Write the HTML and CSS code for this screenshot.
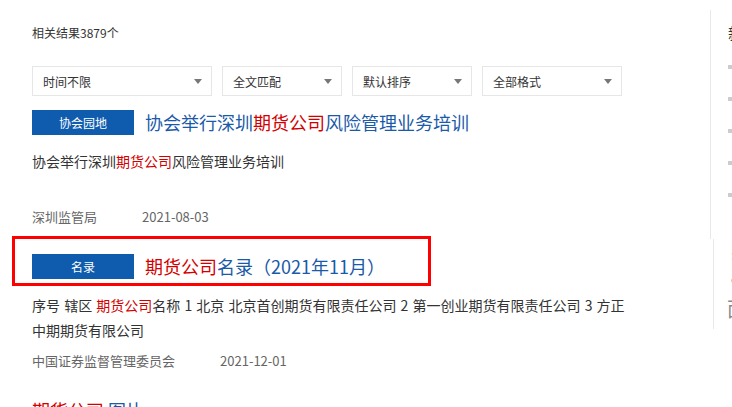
FILE: index.html
```html
<!DOCTYPE html>
<html lang="zh-CN">
<head>
<meta charset="utf-8">
<title>搜索结果</title>
<link rel="stylesheet" href="styles.css">
</head>
<body>
<div class="page">
  <div class="main">
    <div class="count">相关结果3879个</div>
    <div class="filters">
      <div class="select w180"><span>时间不限</span><i class="arrow"></i></div>
      <div class="select w120"><span>全文匹配</span><i class="arrow"></i></div>
      <div class="select w120"><span>默认排序</span><i class="arrow"></i></div>
      <div class="select w140"><span>全部格式</span><i class="arrow"></i></div>
    </div>

    <div class="item first">
      <div class="head">
        <span class="badge">协会园地</span>
        <a class="title">协会举行深圳<em>期货公司</em>风险管理业务培训</a>
      </div>
      <div class="desc">协会举行深圳<em>期货公司</em>风险管理业务培训</div>
      <div class="meta"><span class="src">深圳监管局</span><span class="date">2021-08-03</span></div>
    </div>

    <div class="item">
      <div class="head">
        <span class="badge">名录</span>
        <a class="title"><em>期货公司</em>名录（2021年11月）</a>
      </div>
      <div class="desc">序号 辖区 <em>期货公司</em>名称 1 北京 北京首创期货有限责任公司 2 第一创业期货有限责任公司 3 方正中期期货有限公司</div>
      <div class="meta"><span class="src">中国证券监督管理委员会</span><span class="date">2021-12-01</span></div>
    </div>

    <div class="item">
      <div class="head">
        <a class="title plain"><em>期货公司</em> 图片</a>
      </div>
    </div>

    <div class="highlight"></div>
  </div>

  <div class="side">
    <div class="side-box">
      <div class="side-title">新闻排行</div>
      <ul class="side-list">
        <li>期货公司</li>
        <li>期货公司</li>
        <li>期货公司</li>
        <li>期货公司</li>
        <li>期货公司</li>
      </ul>
    </div>
    <div class="side-box2">
      <div class="orange">:</div>
      <div class="grey">c</div>
      <div class="big">面</div>
    </div>
  </div>
</div>
</body>
</html>
```

FILE: styles.css
```css
html, body {
  margin: 0;
  padding: 0;
  background: #fff;
}
body {
  font-family: "Microsoft YaHei", "Noto Sans CJK SC", "Noto Sans", sans-serif;
  color: #333;
  overflow: hidden;
}
.page {
  display: flex;
  width: 732px;
  height: 407px;
  overflow: hidden;
  position: relative;
}
.main {
  position: relative;
  flex: 0 0 710px;
  box-sizing: border-box;
  padding-left: 32px;
  padding-top: 25px;
}
.count {
  font-size: 12px;
  line-height: 16px;
  color: #333;
}
.filters {
  display: flex;
  gap: 10px;
  margin-top: 25px;
}
.select {
  box-sizing: border-box;
  height: 30px;
  border: 1px solid #e6e6e6;
  display: flex;
  align-items: center;
  justify-content: space-between;
  padding: 0 9px 0 10px;
  font-size: 12px;
  color: #333;
}
.w180 { width: 180px; }
.w120 { width: 120px; }
.w140 { width: 140px; }
.arrow {
  width: 0;
  height: 0;
  border-left: 4px solid transparent;
  border-right: 4px solid transparent;
  border-top: 5px solid #777;
}
.item { margin-top: 27px; }
.item.first { margin-top: 14px; }
.head {
  display: flex;
  align-items: center;
  height: 25px;
}
.badge {
  flex: 0 0 102px;
  height: 25px;
  line-height: 25px;
  background: #0f5cae;
  color: #fff;
  font-size: 12px;
  text-align: center;
}
.title {
  margin-left: 11px;
  font-size: 18px;
  line-height: 25px;
  color: #1a5aa8;
  white-space: nowrap;
}
.title.plain { margin-left: 0; }
em {
  font-style: normal;
  color: #d40000;
}
.desc {
  margin-top: 14px;
  min-height: 50px;
  width: 605px;
  font-size: 14px;
  line-height: 25px;
  word-spacing: 1px;
  color: #333;
}
.meta {
  margin-top: 8px;
  line-height: 20px;
  font-size: 13px;
  color: #666;
}
.date { margin-left: 45px; }
.highlight {
  position: absolute;
  left: 12px;
  top: 236px;
  width: 419px;
  height: 50px;
  box-sizing: border-box;
  border: 3px solid #f00;
}
.side {
  flex: 0 0 200px;
  display: flex;
  flex-direction: column;
}
.side-box {
  margin-top: 10px;
  height: 229px;
  box-sizing: border-box;
  border-left: 1px solid #e8e8e8;
  padding-left: 17px;
  padding-top: 13px;
}
.side-title {
  font-size: 15px;
  line-height: 20px;
  color: #333;
  white-space: nowrap;
}
.side-list {
  list-style: none;
  margin: 8px 0 0;
  padding: 0;
}
.side-list li {
  height: 32px;
  display: flex;
  align-items: center;
  font-size: 13px;
  color: #333;
}
.side-list li::before {
  content: "";
  width: 4px;
  height: 4px;
  background: #ccc;
  margin-right: 8px;
}
.side-box2 {
  margin-left: 3px;
  height: 90px;
  box-sizing: border-box;
  border-left: 1px solid #e8e8e8;
  padding-left: 17px;
  padding-top: 4px;
}
.orange {
  color: #e08a2c;
  font-size: 13px;
  line-height: 24px;
}
.grey {
  color: #666;
  font-size: 13px;
  line-height: 24px;
}
.big {
  color: #888;
  font-size: 20px;
  line-height: 36px;
  margin-left: -4px;
}
```
